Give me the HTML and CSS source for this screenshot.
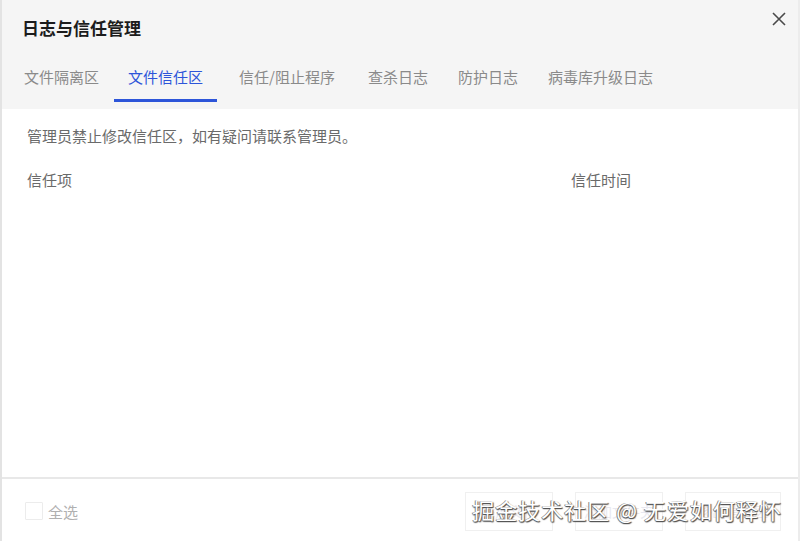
FILE: index.html
```html
<!DOCTYPE html>
<html lang="zh-CN">
<head>
<meta charset="utf-8">
<title>日志与信任管理</title>
<link rel="stylesheet" href="styles.css">
</head>
<body>
<div class="dialog">
  <div class="header">
    <div class="title-row">
      <div class="title">日志与信任管理</div>
      <button class="close" aria-label="关闭">
        <svg width="14" height="14" viewBox="0 0 14 14"><path d="M1 1 L13 13 M13 1 L1 13" stroke="#4a4a4a" stroke-width="1.6" fill="none"/></svg>
      </button>
    </div>
    <div class="tabs">
      <div class="tab">文件隔离区</div>
      <div class="tab active">文件信任区</div>
      <div class="tab">信任/阻止程序</div>
      <div class="tab">查杀日志</div>
      <div class="tab">防护日志</div>
      <div class="tab">病毒库升级日志</div>
    </div>
  </div>
  <div class="content">
    <div class="notice">管理员禁止修改信任区，如有疑问请联系管理员。</div>
    <div class="table-head">
      <div class="col-item">信任项</div>
      <div class="col-time">信任时间</div>
    </div>
  </div>
  <div class="footer">
    <label class="check"><span class="box"></span><span class="check-label">全选</span></label>
    <div class="buttons">
      <div class="btn">添加文件</div>
      <div class="btn">添加文件夹</div>
      <div class="btn wide">移出信任区</div>
    </div>
    <div class="watermark">掘金技术社区 @ 无爱如何释怀</div>
  </div>
</div>
</body>
</html>
```
FILE: styles.css
```css
html, body {
  margin: 0;
  padding: 0;
  background: #ffffff;
}
body {
  font-family: "Noto Sans CJK SC", "Microsoft YaHei", sans-serif;
}
.dialog {
  width: 800px;
  height: 541px;
  box-sizing: border-box;
  border-left: 2px solid #e3e3e3;
  border-right: 2px solid #ececec;
  display: flex;
  flex-direction: column;
  background: #fff;
}
.header {
  background: #f5f5f5;
  height: 109px;
  box-sizing: border-box;
}
.title-row {
  display: flex;
  justify-content: space-between;
  align-items: flex-start;
  padding: 17px 12px 0 20px;
}
.title {
  font-size: 17px;
  line-height: 22px;
  font-weight: 700;
  color: #1c1c1c;
}
.close {
  border: 0;
  background: transparent;
  padding: 0;
  margin-top: -5px;
  width: 14px;
  height: 14px;
  display: block;
}
.close svg { display: block; }
.tabs {
  display: flex;
  margin-top: 28px;
  padding-left: 8px;
}
.tab {
  font-size: 15px;
  line-height: 20px;
  color: #8a8a8a;
  padding: 0 14px 12px;
  border-bottom: 3px solid transparent;
}
.tab:nth-child(2) { margin-left: 1px; }
.tab:nth-child(3) { margin-left: 8px; }
.tab:nth-child(4) { margin-left: 5px; }
.tab:nth-child(5) { margin-left: 2px; }
.tab:nth-child(6) { margin-left: 2px; }
.tab.active {
  color: #2d55d9;
  border-bottom-color: #2d55d9;
}
.content {
  flex: 1;
  padding: 16px 0 0 25px;
}
.notice {
  font-size: 15px;
  line-height: 22px;
  color: #6a6a6a;
}
.table-head {
  display: flex;
  margin-top: 22px;
  font-size: 15px;
  line-height: 22px;
  color: #6a6a6a;
}
.col-item { width: 544px; }
.footer {
  position: relative;
  height: 62px;
  border-top: 2px solid #e8e8e8;
  display: flex;
  align-items: center;
  justify-content: space-between;
  padding: 0 17px 0 23px;
}
.check {
  display: flex;
  align-items: center;
  gap: 5px;
  margin-top: 2px;
}
.box {
  width: 16px;
  height: 16px;
  border: 1px solid #ececec;
  border-radius: 1px;
  background: #fff;
}
.check-label {
  font-size: 15px;
  color: #b0b0b0;
}
.buttons {
  display: flex;
  gap: 22px;
  margin-top: 3px;
}
.btn {
  width: 88px;
  height: 39px;
  border: 1px solid #f0f0f0;
  box-sizing: border-box;
  font-size: 14px;
  line-height: 37px;
  text-align: center;
  color: #e8e8f0;
  background: #fff;
}
.btn.wide { width: 96px; }
.watermark {
  position: absolute;
  right: 16px;
  top: 16px;
  font-size: 22px;
  line-height: 28px;
  color: #ffffff;
  letter-spacing: 1px;
  text-shadow: 1px 1px 1px #555, -1px 0 0 #888, 0 1px 1px #444;
}
```
